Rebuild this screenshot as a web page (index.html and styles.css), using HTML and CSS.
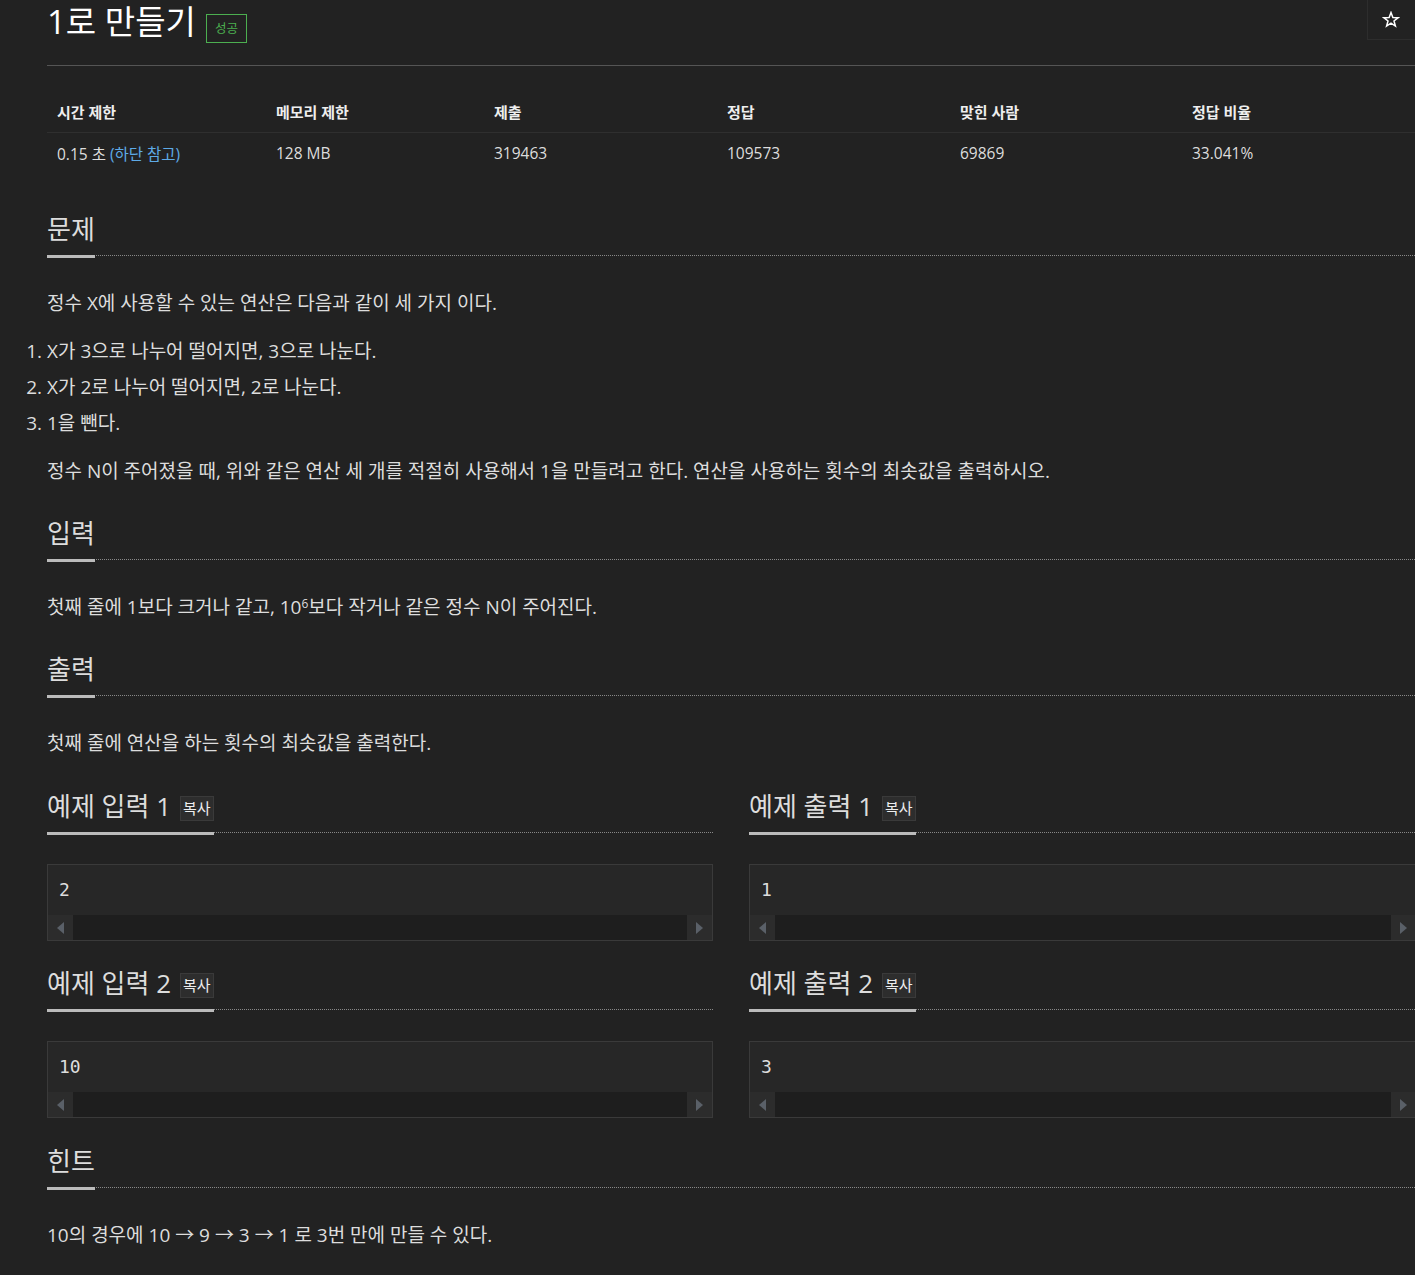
FILE: index.html
```html
<!DOCTYPE html>
<html lang="ko">
<head>
<meta charset="utf-8">
<title>1로 만들기</title>
<link rel="stylesheet" href="styles.css">
</head>
<body>
<div class="page">
  <div class="header">
    <h1 class="title">1로 만들기<span class="label">성공</span></h1>
    <button class="star-btn" type="button" aria-label="즐겨찾기">
      <svg width="18" height="18" viewBox="0 0 24 24"><polygon points="12,2 14.47,8.6 21.51,8.91 15.99,13.3 17.88,20.09 12,16.2 6.12,20.09 8.01,13.3 2.49,8.91 9.53,8.6" fill="none" stroke="#fff" stroke-width="2" stroke-linejoin="miter"/></svg>
    </button>
  </div>
  <div class="rule"></div>

  <table class="info">
    <thead>
      <tr>
        <th class="c1">시간 제한</th>
        <th class="c2">메모리 제한</th>
        <th class="c3">제출</th>
        <th class="c4">정답</th>
        <th class="c5">맞힌 사람</th>
        <th class="c6">정답 비율</th>
      </tr>
    </thead>
    <tbody>
      <tr>
        <td>0.15 초 <a class="link" href="#">(하단 참고)</a></td>
        <td>128 MB</td>
        <td>319463</td>
        <td>109573</td>
        <td>69869</td>
        <td>33.041%</td>
      </tr>
    </tbody>
  </table>

  <section class="sec sec-first">
    <div class="sec-head"><h2 class="sec-title"><span class="sec-name">문제</span></h2></div>
    <div class="sec-body">
      <p>정수 X에 사용할 수 있는 연산은 다음과 같이 세 가지 이다.</p>
      <ol class="steps">
        <li>X가 3으로 나누어 떨어지면, 3으로 나눈다.</li>
        <li>X가 2로 나누어 떨어지면, 2로 나눈다.</li>
        <li>1을 뺀다.</li>
      </ol>
      <p>정수 N이 주어졌을 때, 위와 같은 연산 세 개를 적절히 사용해서 1을 만들려고 한다. 연산을 사용하는 횟수의 최솟값을 출력하시오.</p>
    </div>
  </section>

  <section class="sec">
    <div class="sec-head"><h2 class="sec-title"><span class="sec-name">입력</span></h2></div>
    <div class="sec-body">
      <p>첫째 줄에 1보다 크거나 같고, 10<sup>6</sup>보다 작거나 같은 정수 N이 주어진다.</p>
    </div>
  </section>

  <section class="sec">
    <div class="sec-head"><h2 class="sec-title"><span class="sec-name">출력</span></h2></div>
    <div class="sec-body">
      <p>첫째 줄에 연산을 하는 횟수의 최솟값을 출력한다.</p>
    </div>
  </section>

  <div class="samples">
    <section class="sample">
      <div class="sec-head"><h2 class="sec-title"><span class="sec-name">예제 입력 1<span class="copy">복사</span></span></h2></div>
      <div class="sample-box">
        <pre class="sample-text">2</pre>
        <div class="sbar"><span class="sbtn"><i class="tri-l"></i></span><span class="strack"></span><span class="sbtn"><i class="tri-r"></i></span></div>
      </div>
    </section>
    <section class="sample">
      <div class="sec-head"><h2 class="sec-title"><span class="sec-name">예제 출력 1<span class="copy">복사</span></span></h2></div>
      <div class="sample-box">
        <pre class="sample-text">1</pre>
        <div class="sbar"><span class="sbtn"><i class="tri-l"></i></span><span class="strack"></span><span class="sbtn"><i class="tri-r"></i></span></div>
      </div>
    </section>
  </div>

  <div class="samples samples-next">
    <section class="sample">
      <div class="sec-head"><h2 class="sec-title"><span class="sec-name">예제 입력 2<span class="copy">복사</span></span></h2></div>
      <div class="sample-box">
        <pre class="sample-text">10</pre>
        <div class="sbar"><span class="sbtn"><i class="tri-l"></i></span><span class="strack"></span><span class="sbtn"><i class="tri-r"></i></span></div>
      </div>
    </section>
    <section class="sample">
      <div class="sec-head"><h2 class="sec-title"><span class="sec-name">예제 출력 2<span class="copy">복사</span></span></h2></div>
      <div class="sample-box">
        <pre class="sample-text">3</pre>
        <div class="sbar"><span class="sbtn"><i class="tri-l"></i></span><span class="strack"></span><span class="sbtn"><i class="tri-r"></i></span></div>
      </div>
    </section>
  </div>

  <section class="sec sec-hint">
    <div class="sec-head"><h2 class="sec-title"><span class="sec-name">힌트</span></h2></div>
    <div class="sec-body">
      <p>10의 경우에 10 → 9 → 3 → 1 로 3번 만에 만들 수 있다.</p>
    </div>
  </section>
</div>
</body>
</html>
```

FILE: styles.css
```css
html, body {
  margin: 0;
  padding: 0;
  background: #222222;
  overflow: hidden;
}

.page {
  position: relative;
  width: 1370px;
  padding-left: 47px;
  font-family: "Open Sans", "Noto Sans CJK KR", sans-serif;
  color: #dddddd;
}

.header {
  display: flex;
  align-items: flex-start;
}

.title {
  margin: 0;
  font-size: 33px;
  line-height: 44px;
  font-weight: 400;
  color: #ffffff;
}

.label {
  display: inline-block;
  vertical-align: top;
  margin: 14px 0 0 10px;
  padding: 4px 8px;
  border: 1px solid #4caf50;
  color: #4caf50;
  font-size: 12.5px;
  line-height: 19px;
}

.star-btn {
  position: absolute;
  top: -1px;
  left: 1367px;
  width: 52px;
  height: 41px;
  padding: 0 4px 0 0;
  border: 1px solid #2d2d2d;
  background: #222222;
  display: flex;
  align-items: center;
  justify-content: center;
}

.rule {
  margin-top: 21px;
  height: 1px;
  background: #555555;
}

.info {
  margin-top: 24px;
  width: 1368px;
  border-collapse: collapse;
  table-layout: fixed;
}

.info th {
  height: 42px;
  padding: 0 10px;
  text-align: left;
  font-size: 15px;
  font-weight: 700;
  color: #eeeeee;
  border-bottom: 1px solid #2f2f2f;
}

.info td {
  height: 40px;
  padding: 0 10px;
  font-size: 15.5px;
  color: #dddddd;
}

.c1 { width: 199px; }
.c2 { width: 198px; }
.c3 { width: 213px; }
.c4 { width: 213px; }
.c5 { width: 212px; }

.link {
  color: #5eaae6;
  text-decoration: none;
}

.sec {
  margin-top: 30px;
}

.sec-first {
  margin-top: 39px;
}

.sec-head {
  border-bottom: 1px dotted #888888;
}

.sec-title {
  margin: 0;
  padding-bottom: 9px;
  font-size: 26px;
  line-height: 34px;
  font-weight: 400;
  color: #dddddd;
}

.sec-name {
  display: inline-block;
  vertical-align: top;
  border-bottom: 3px solid #bbbbbb;
  margin-bottom: -12px;
  padding-bottom: 9px;
}

.sec-body p {
  margin: 32px 0 0;
  font-size: 19px;
  line-height: 30px;
}

.sec-body .steps + p {
  margin-top: 0;
}

.steps {
  margin: 15px 0;
  padding: 0;
  font-size: 19px;
  line-height: 36px;
}

sup {
  font-size: 12px;
  line-height: 0;
  vertical-align: 6px;
}

.copy {
  display: inline-block;
  vertical-align: top;
  margin: 7px 0 0 9px;
  padding: 2px 2px;
  border: 1px solid #3a3a3a;
  background: #2d2d2d;
  color: #eeeeee;
  font-size: 15px;
  line-height: 19px;
}

.samples {
  margin-top: 31px;
  display: grid;
  grid-template-columns: 666px 668px;
  column-gap: 36px;
}

.samples-next {
  margin-top: 25px;
}

.sample-box {
  margin-top: 31px;
  border: 1px solid #3a3a3a;
  background: #272727;
}

.sample-text {
  margin: 0;
  padding: 15px 11px;
  font-family: "DejaVu Sans Mono", monospace;
  font-size: 18px;
  line-height: 20px;
  color: #dddddd;
}

.sbar {
  display: flex;
  height: 25px;
  background: #1e1e1e;
}

.sbtn {
  width: 25px;
  background: #2c2c2c;
  display: flex;
  align-items: center;
  justify-content: center;
}

.strack {
  flex: 1;
}

.tri-l {
  width: 0;
  height: 0;
  border-top: 6px solid transparent;
  border-bottom: 6px solid transparent;
  border-right: 7px solid #5a6068;
}

.tri-r {
  width: 0;
  height: 0;
  border-top: 6px solid transparent;
  border-bottom: 6px solid transparent;
  border-left: 7px solid #5a6068;
}

.sec-hint {
  margin-top: 26px;
}
```
